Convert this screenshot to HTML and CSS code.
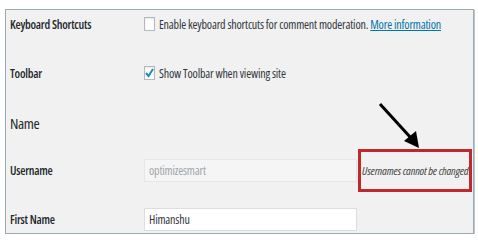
FILE: index.html
```html
<!DOCTYPE html>
<html lang="en">
<head>
    <meta charset="UTF-8">
    <meta name="viewport" content="width=device-width, initial-scale=1.0">
    <title>Profile Settings</title>
    <link rel="stylesheet" href="styles.css">
</head>
<body>
    <div class="frame">
        <div class="row">
            <div class="label">Keyboard Shortcuts</div>
            <div class="field">
                <span class="checkbox"></span>
                <span class="text">Enable keyboard shortcuts for comment moderation. <a href="#">More information</a></span>
            </div>
        </div>

        <div class="row">
            <div class="label">Toolbar</div>
            <div class="field">
                <span class="checkbox checked">
                    <svg viewBox="0 0 11 14" width="11" height="14"><path d="M2 7 L4.5 10 L9 3" fill="none" stroke="#1e8cbe" stroke-width="2"/></svg>
                </span>
                <span class="text">Show Toolbar when viewing site</span>
            </div>
        </div>

        <div class="row heading">
            <h2>Name</h2>
        </div>

        <div class="row">
            <div class="label">Username</div>
            <div class="field">
                <span class="input disabled">optimizesmart</span>
                <span class="description">Usernames cannot be changed.</span>
            </div>
        </div>

        <div class="row">
            <div class="label">First Name</div>
            <div class="field">
                <span class="input">Himanshu</span>
            </div>
        </div>

        <svg class="arrow" viewBox="0 0 50 50" width="50" height="50">
            <line x1="2" y1="2" x2="33" y2="36" stroke="#000" stroke-width="3"/>
            <polygon points="41,46 26,39 38,29" fill="#000"/>
        </svg>
    </div>
</body>
</html>
```

FILE: styles.css
```css
* {
    margin: 0;
    padding: 0;
    box-sizing: border-box;
}

body {
    font-family: "Open Sans", "Noto Sans", sans-serif;
    font-stretch: 75%;
    font-size: 12px;
    letter-spacing: -0.18px;
    color: #23282d;
    background: #fff;
}

.frame {
    position: relative;
    margin: 9px 4px 0 5px;
    height: 225px;
    border: 1px solid #9aabb6;
    box-shadow: 1px 1px 0 #b9c3c9;
    background: #f1f1f1;
    padding-top: 2px;
    display: flex;
    flex-direction: column;
    gap: 25px;
    overflow: hidden;
}

.row {
    display: flex;
    align-items: center;
    height: 24px;
    white-space: nowrap;
}

.label {
    width: 138px;
    padding-left: 4px;
    font-weight: 600;
    letter-spacing: -0.25px;
}

.field {
    display: flex;
    align-items: center;
    gap: 4px;
}

.checkbox {
    width: 11px;
    height: 14px;
    border: 1px solid #b4b9be;
    background: #fff;
    box-shadow: inset 0 1px 2px rgb(0 0 0 / 0.1);
    display: block;
}

.checkbox svg {
    display: block;
    margin: -1px;
}

.text {
    color: #32373c;
}

.text a {
    color: #0073aa;
}

.heading {
    margin-top: 1px;
    margin-bottom: -2px;
    padding-left: 4px;
}

h2 {
    font-size: 15px;
    font-weight: 400;
    letter-spacing: -0.4px;
}

.input {
    width: 213px;
    height: 23px;
    border: 1px solid #ddd;
    background: #fff;
    padding: 0 4px;
    line-height: 21px;
    color: #32373c;
}

.input.disabled {
    background: #f5f5f5;
    border-color: #e6e6e6;
    color: #a0a5aa;
}

.description {
    margin-left: -3px;
    height: 43px;
    width: 114px;
    border: 3px solid #c1272d;
    font-style: italic;
    color: #444;
    font-size: 11.5px;
    letter-spacing: -0.2px;
    display: flex;
    align-items: center;
    padding-left: 1px;
    overflow: hidden;
}

.arrow {
    position: absolute;
    left: 372px;
    top: 92px;
}
```
